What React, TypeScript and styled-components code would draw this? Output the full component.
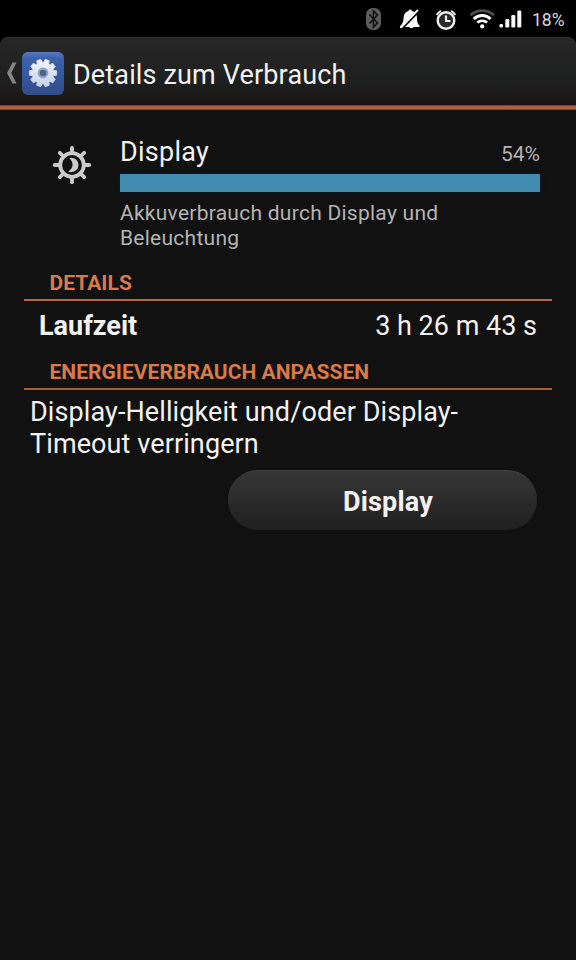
import React from "react";
import styled, { createGlobalStyle } from "styled-components";

const GlobalStyle = createGlobalStyle`
  * { box-sizing: border-box; }
  body { margin: 0; background: #111111; }
`;

const Screen = styled.div`
  width: 576px;
  height: 960px;
  display: flex;
  flex-direction: column;
  overflow: hidden;
  background: #111111;
  color: #f2f2f2;
  font-family: Roboto, "Liberation Sans", sans-serif;
`;

const StatusBar = styled.header`
  display: flex;
  height: 37px;
  flex: none;
  background: #000;
`;

const StatusIcons = styled.svg`
  display: block;
  width: 526px;
  height: 37px;
`;

const Battery = styled.span`
  padding-left: 6px;
  font-size: 17.5px;
  line-height: 40px;
  color: #d8d8d8;
  white-space: nowrap;
`;

const HeaderWrap = styled.div`
  flex: none;
  background: #000;
`;

const TitleBar = styled.div`
  height: 68px;
  display: flex;
  align-items: flex-start;
  border-top: 1px solid #303030;
  border-radius: 8px 8px 0 0;
  background: linear-gradient(#272727, #1c1e1d 75%, #1c1512);
`;

const BackChevron = styled.svg`
  width: 12px;
  height: 24px;
  margin: 23px 4px 0 6px;
`;

const AppIcon = styled.svg`
  width: 42px;
  height: 43px;
  margin-top: 14px;
`;

const Title = styled.h1`
  margin: 17px 0 0 9px;
  font-size: 27px;
  line-height: 40px;
  font-weight: 400;
  letter-spacing: 0.15px;
  white-space: nowrap;
`;

const Accent = styled.div`
  height: 5px;
  background: linear-gradient(#6b3119, #ad6040 30%, #b3623e 75%, #61301c);
`;

const Usage = styled.section`
  display: flex;
  height: 158px;
  padding: 27px 36px 0 52px;
`;

const DisplayIcon = styled.svg`
  width: 40px;
  height: 40px;
  margin: 8px 28px 0 0;
`;

const UsageBody = styled.div`
  flex: 1;
`;

const UsageHead = styled.div`
  display: flex;
  justify-content: space-between;
  height: 37px;
`;

const Name = styled.span`
  font-size: 27px;
  line-height: 31px;
  letter-spacing: 0.25px;
`;

const Percent = styled.span`
  font-size: 21px;
  line-height: 35px;
  color: #b4b4b4;
`;

const Meter = styled.div`
  height: 18px;
  background: #428cb2;
  box-shadow: 0 0 3px 1px #061821;
`;

const Description = styled.p`
  margin: 9px 0 0;
  font-size: 21px;
  line-height: 25px;
  letter-spacing: 0.26px;
  color: #b4b4b4;
  white-space: nowrap;
`;

const SectionTitle = styled.h2<{ $line: string }>`
  margin: 0 24px;
  padding-left: 25.5px;
  height: 33px;
  border-bottom: 2px solid ${(p) => p.$line};
  font-size: 21px;
  line-height: 31px;
  font-weight: 700;
  letter-spacing: 0.03px;
  color: #d97a4a;
  white-space: nowrap;
`;

const Row = styled.div`
  display: flex;
  justify-content: space-between;
  height: 56px;
  padding: 0 39px;
  font-size: 27px;
  line-height: 50px;
`;

const Label = styled.span`
  font-weight: 700;
`;

const Value = styled.span``;

const Hint = styled.p`
  margin: 7px 0 0 30px;
  font-size: 27px;
  line-height: 31.5px;
  letter-spacing: 0.1px;
  white-space: nowrap;
`;

const Button = styled.button`
  align-self: flex-end;
  width: 309px;
  height: 60px;
  margin: 10px 39px 0 0;
  padding: 2px 0 0 11px;
  border: 0;
  border-top: 1px solid #404040;
  border-radius: 30px;
  background: linear-gradient(#363636, #202020);
  color: #f2f2f2;
  font: 700 27px/58px Roboto, "Liberation Sans", sans-serif;
  letter-spacing: 0.15px;
`;

const spokes = [0, 45, 90, 135, 180, 225, 270, 315];

const TEETH = 10;
const gearPoints = Array.from({ length: TEETH }, (_, i) => {
  const middle = 18 + (i * 360) / TEETH;
  return [
    [-14.5, 10.8],
    [-9, 13.8],
    [9, 13.8],
    [14.5, 10.8],
  ]
    .map(([offset, radius]) => {
      const a = ((middle + offset) * Math.PI) / 180;
      return `${(21 + radius * Math.sin(a)).toFixed(2)},${(21 - radius * Math.cos(a)).toFixed(2)}`;
    })
    .join(" ");
}).join(" ");

export default function App() {
  return (
    <Screen>
      <GlobalStyle />
      <StatusBar>
        <StatusIcons viewBox="0 0 526 37" fill="none">
          <rect x="366" y="8" width="15" height="22" rx="6.5" fill="#5b5b5b" />
          <path d="M369.5 14.5l8 8.5-4 4V11l4 4-8 8.5" stroke="#111" strokeWidth="1.6" />
          <path
            d="M400 28v-1.500c3-3 3.500-6 3.700-9.500.3-3.500 2-5.500 4.800-6 .3-2 3-2 3.400 0 3.200.5 4.800 2.800 5 6 .2 4.500.4 6.500 2.600 8.500V27h-6c-.5 1.600-3.600 1.600-4 0h-5.500z"
            fill="#f8f8f8"
          />
          <path d="M400.500 27.500L418 10" stroke="#f8f8f8" strokeWidth="2.200" />
          <path d="M403.500 27.500L419 11.500" stroke="#000" strokeWidth="1.700" />
          <circle cx="446" cy="20.500" r="8.300" fill="#2a2a2a" stroke="#f0f0f0" strokeWidth="2.400" />
          <path d="M446 15.500v5.500h4.500" stroke="#f0f0f0" strokeWidth="2.200" />
          <path d="M436.700 15a10 10 0 0 1 4.300-4.200M455.300 15a10 10 0 0 0-4.300-4.200" stroke="#f0f0f0" strokeWidth="2" />
          <path d="M470.500 15.300a17 17 0 0 1 23.500 0" stroke="#4c4c4c" strokeWidth="2.800" />
          <path d="M473.800 19a12 12 0 0 1 16.800 0" stroke="#fff" strokeWidth="3" />
          <path d="M477.300 22.600a7.500 7.500 0 0 1 9.800 0" stroke="#fff" strokeWidth="2.700" />
          <circle cx="482.200" cy="26.400" r="2.100" fill="#fff" />
          <g fill="#f8f8f8">
            <rect x="499.500" y="24" width="3.500" height="3.500" rx="1.200" />
            <rect x="505.300" y="19" width="4" height="8.500" rx="1.200" />
            <rect x="511.300" y="15" width="4" height="12.500" rx="1.200" />
            <rect x="517.300" y="10.500" width="4" height="17" rx="1.200" />
          </g>
        </StatusIcons>
        <Battery>18%</Battery>
      </StatusBar>
      <HeaderWrap>
        <TitleBar>
          <BackChevron viewBox="0 0 12 24">
            <path d="M6.500 1.500h4L5.300 12l5.200 10.500h-4L1 12z" fill="#858585" />
          </BackChevron>
          <AppIcon viewBox="0 0 42 43">
            <defs>
              <linearGradient id="tile" x1="0" y1="0" x2="0" y2="1">
                <stop offset="0" stopColor="#5579bb" />
                <stop offset="0.15" stopColor="#3d62aa" />
                <stop offset="1" stopColor="#304c8b" />
              </linearGradient>
              <linearGradient id="cog" x1="0" y1="0" x2="0" y2="1">
                <stop offset="0" stopColor="#f3f5fa" />
                <stop offset="1" stopColor="#c3d0e9" />
              </linearGradient>
            </defs>
            <rect width="42" height="43" rx="6" fill="url(#tile)" />
            <polygon points={gearPoints} fill="url(#cog)" stroke="#d5deef" strokeWidth="0.8" strokeLinejoin="round" />
            <circle cx="21" cy="21" r="5.400" fill="#8fa5c6" />
            <circle cx="21" cy="21" r="3.300" fill="#4b668c" />
          </AppIcon>
          <Title>Details zum Verbrauch</Title>
        </TitleBar>
        <Accent />
      </HeaderWrap>
      <Usage>
        <DisplayIcon viewBox="0 0 40 40">
          <g stroke="#cbcbcb" strokeWidth="3.800">
            {spokes.map((a) => (
              <path key={a} d="M20 8V2.800" strokeLinecap="round" transform={`rotate(${a} 20 20)`} />
            ))}
            <circle cx="20" cy="20" r="11.800" fill="none" strokeWidth="3.800" />
          </g>
          <path d="M17.300 13a7.200 7.200 0 1 1-1 13.500c5.500-3.500 5.500-9 1-13.500z" fill="#cbcbcb" />
        </DisplayIcon>
        <UsageBody>
          <UsageHead>
            <Name>Display</Name>
            <Percent>54%</Percent>
          </UsageHead>
          <Meter />
          <Description>
            Akkuverbrauch durch Display und
            <br />
            Beleuchtung
          </Description>
        </UsageBody>
      </Usage>
      <SectionTitle $line="#b3663e">DETAILS</SectionTitle>
      <Row>
        <Label>Laufzeit</Label>
        <Value>3 h 26 m 43 s</Value>
      </Row>
      <SectionTitle $line="#a85f31">ENERGIEVERBRAUCH ANPASSEN</SectionTitle>
      <Hint>
        Display-Helligkeit und/oder Display-
        <br />
        Timeout verringern
      </Hint>
      <Button>Display</Button>
    </Screen>
  );
}
